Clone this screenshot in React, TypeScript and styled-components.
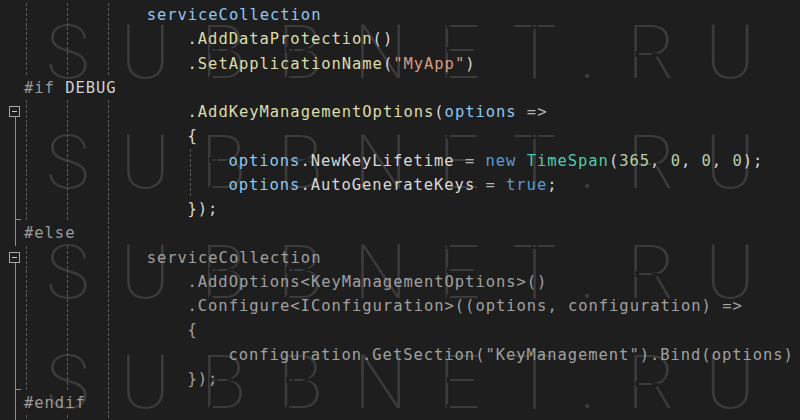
import styled, { createGlobalStyle } from "styled-components";

// char pitch of the editor font, every indent and guide is measured from it
const CW = 10.22;
const FS = 15.5;
const LINE_H = 24.25;

const GlobalStyle = createGlobalStyle`
    html, body {
        margin: 0;
        padding: 0;
        background: #1e1e1e;
    }
`;

const Editor = styled.div`
    position: relative;
    width: 800px;
    height: 420px;
    overflow: hidden;
    background: #1e1e1e;
    display: flex;
    flex-direction: column;
    padding-top: 3px;
    box-sizing: border-box;
    font-family: "DejaVu Sans Mono", "Liberation Mono", monospace;
    font-size: ${FS}px;
    letter-spacing: 0.95px;
`;

const Row = styled.div`
    position: relative;
    z-index: 1;
    display: flex;
    height: ${LINE_H}px;
    line-height: ${LINE_H}px;
    flex-shrink: 0;
`;

type FoldKind = "none" | "box" | "line" | "end";

const Fold = styled.div<{ $kind: FoldKind }>`
    position: relative;
    width: 24px;
    flex-shrink: 0;

    /* the vertical region line */
    &::before {
        content: "";
        display: ${(p) => (p.$kind === "none" ? "none" : "block")};
        position: absolute;
        left: 15px;
        width: 1px;
        top: ${(p) => (p.$kind === "box" ? "13px" : "0")};
        bottom: 0;
        background: #8c8c8c;
    }

    /* closing tick at the end of a region */
    &::after {
        content: "";
        display: ${(p) => (p.$kind === "end" ? "block" : "none")};
        position: absolute;
        left: 15px;
        width: 6px;
        bottom: 1px;
        height: 1px;
        background: #8c8c8c;
    }
`;

const FoldBox = styled.span`
    position: absolute;
    left: 9px;
    top: 6px;
    width: 11px;
    height: 11px;
    box-sizing: border-box;
    border: 1px solid #a8a8a8;
    background: #1e1e1e;

    &::after {
        content: "";
        position: absolute;
        left: 2px;
        right: 2px;
        top: 4px;
        height: 1px;
        background: #d0d0d0;
    }
`;

const guideLayer = (col: number) =>
    `repeating-linear-gradient(to bottom, #5c5c5c 0 3px, transparent 3px 5px) ${Math.round(
        col * CW + 2.2
    )}px 0 / 1px 100% no-repeat`;

const Code = styled.div<{ $indent: number; $guides: number[] }>`
    flex: 1;
    white-space: pre;
    padding-left: ${(p) => p.$indent * CW}px;
    background: ${(p) => (p.$guides.length ? p.$guides.map(guideLayer).join(", ") : "none")};
`;

type Kind = "id" | "fn" | "p" | "str" | "kw" | "type" | "num" | "op" | "pre" | "macro" | "dim";

const colors: Record<Kind, string> = {
    id: "#8ec6f2",
    fn: "#dcdcaa",
    p: "#d8d8d8",
    str: "#d69d85",
    kw: "#569cd6",
    type: "#4ec9b0",
    num: "#b5cea8",
    op: "#b4b4b4",
    pre: "#9b9b9b",
    macro: "#d0d0d0",
    dim: "#a0a0a0",
};

const Tok = styled.span<{ $kind: Kind }>`
    color: ${(p) => colors[p.$kind]};
`;

// the site watermark sits behind the code
const Watermark = styled.div`
    position: absolute;
    inset: 0;
    z-index: 0;
    pointer-events: none;
    display: flex;
    flex-direction: column;
    margin-top: -2px;
`;

const MarkRow = styled.div`
    height: 110px;
    line-height: 110px;
    padding-left: 45px;
    font-family: Roboto, "Open Sans", Lato, sans-serif;
    font-weight: 300;
    font-size: 77px;
    letter-spacing: 29.4px;
    color: #3b3b3b;
    -webkit-text-stroke: 2px #1e1e1e;
    white-space: nowrap;
`;

type Line = {
    indent: number;
    fold: FoldKind;
    box?: boolean;
    guides: number[];
    toks: [string, Kind][];
};

const G = [0, 4, 8];
const GI = [0, 4, 8, 16];

const lines: Line[] = [
    { indent: 12, fold: "none", guides: G, toks: [["serviceCollection", "id"]] },
    { indent: 16, fold: "none", guides: G, toks: [[".", "p"], ["AddDataProtection", "fn"], ["()", "p"]] },
    {
        indent: 16, fold: "none", guides: G,
        toks: [[".", "p"], ["SetApplicationName", "fn"], ["(", "p"], ['"MyApp"', "str"], [")", "p"]],
    },
    { indent: 0, fold: "none", guides: [], toks: [["#if", "pre"], [" DEBUG", "macro"]] },
    {
        indent: 16, fold: "box", box: true, guides: G,
        toks: [[".", "p"], ["AddKeyManagementOptions", "fn"], ["(", "p"], ["options", "id"], [" =>", "op"]],
    },
    { indent: 16, fold: "line", guides: G, toks: [["{", "p"]] },
    {
        indent: 20, fold: "line", guides: GI,
        toks: [
            ["options", "id"], [".", "p"], ["NewKeyLifetime", "p"], [" = ", "op"], ["new", "kw"], [" ", "p"],
            ["TimeSpan", "type"], ["(", "p"], ["365", "num"], [", ", "p"], ["0", "num"], [", ", "p"],
            ["0", "num"], [", ", "p"], ["0", "num"], [");", "p"],
        ],
    },
    {
        indent: 20, fold: "line", guides: GI,
        toks: [["options", "id"], [".", "p"], ["AutoGenerateKeys", "p"], [" = ", "op"], ["true", "kw"], [";", "p"]],
    },
    { indent: 16, fold: "end", guides: G, toks: [["});", "p"]] },
    { indent: 0, fold: "line", guides: [8], toks: [["#else", "pre"]] },
    { indent: 12, fold: "box", box: true, guides: G, toks: [["serviceCollection", "dim"]] },
    { indent: 16, fold: "line", guides: G, toks: [[".AddOptions<KeyManagementOptions>()", "dim"]] },
    { indent: 16, fold: "line", guides: G, toks: [[".Configure<IConfiguration>((options, configuration) =>", "dim"]] },
    { indent: 16, fold: "line", guides: G, toks: [["{", "dim"]] },
    {
        indent: 20, fold: "line", guides: G,
        toks: [['configuration.GetSection("KeyManagement").Bind(options)', "dim"]],
    },
    { indent: 16, fold: "end", guides: G, toks: [["});", "dim"]] },
    { indent: 0, fold: "line", guides: [8], toks: [["#endif", "pre"]] },
    { indent: 0, fold: "line", guides: G, toks: [] },
];

export default function App() {
    return (
        <>
            <GlobalStyle />
            <Editor>
                <Watermark>
                    {[0, 1, 2, 3].map((n) => (
                        <MarkRow key={n}>SUBBNET.RU</MarkRow>
                    ))}
                </Watermark>
                {lines.map((l, i) => (
                    <Row key={i}>
                        <Fold $kind={l.fold}>{l.box && <FoldBox />}</Fold>
                        <Code $indent={l.indent} $guides={l.guides}>
                            {l.toks.map(([t, k], j) => (
                                <Tok key={j} $kind={k}>
                                    {t}
                                </Tok>
                            ))}
                        </Code>
                    </Row>
                ))}
            </Editor>
        </>
    );
}
